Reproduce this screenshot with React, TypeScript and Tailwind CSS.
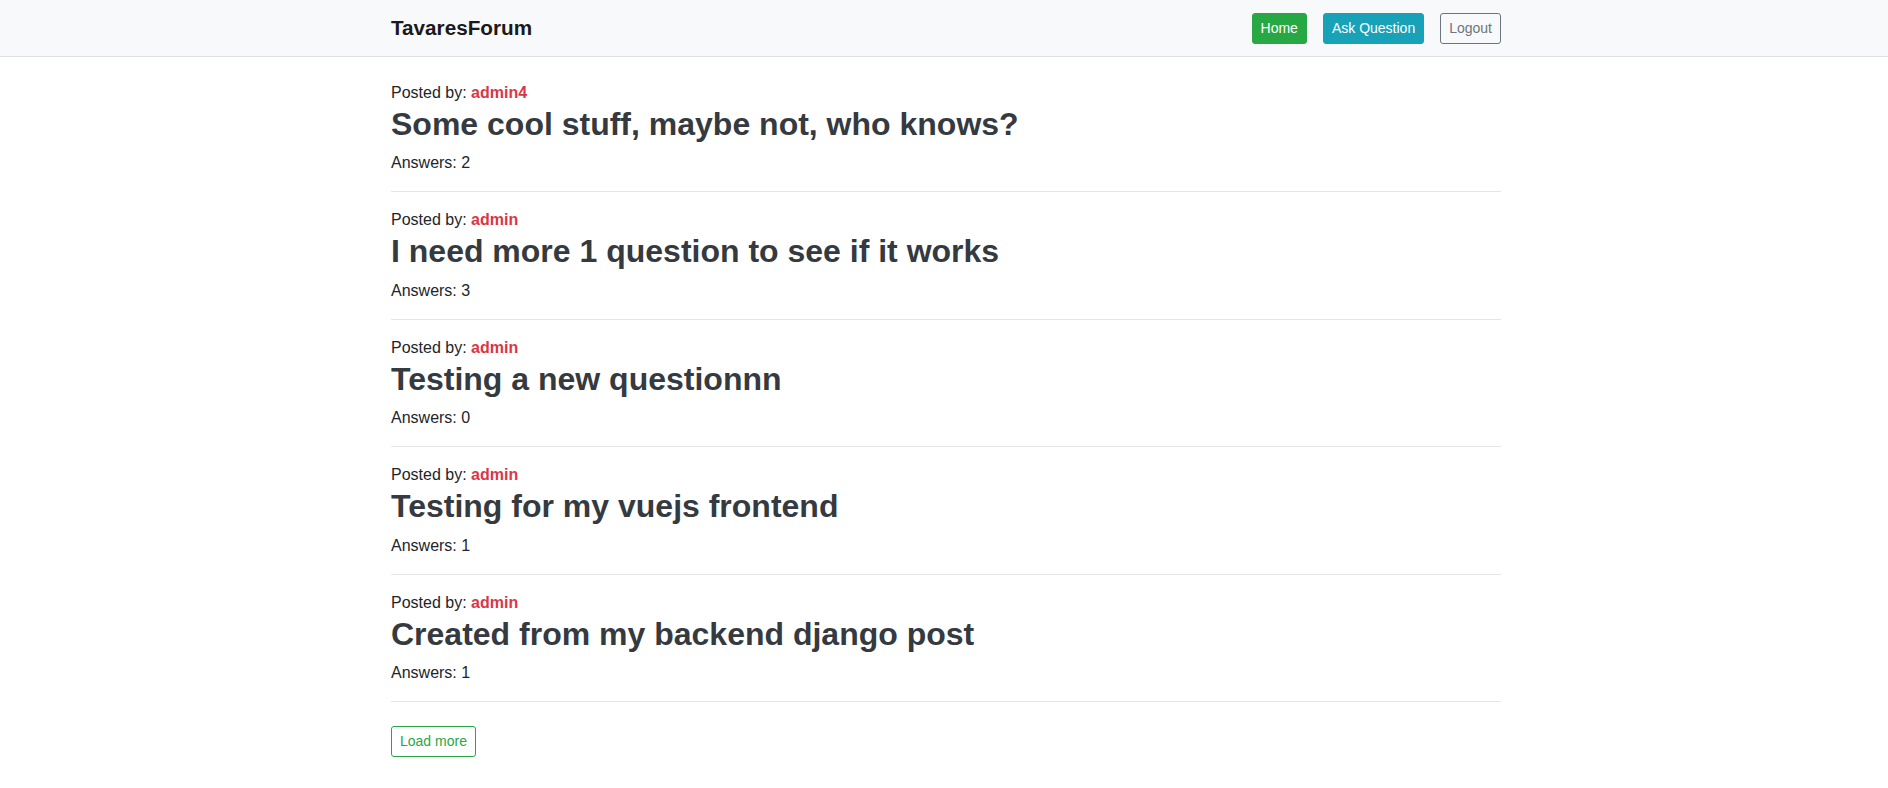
const questions = [
  { author: "admin4", title: "Some cool stuff, maybe not, who knows?", answers: 2 },
  { author: "admin", title: "I need more 1 question to see if it works", answers: 3 },
  { author: "admin", title: "Testing a new questionnn", answers: 0 },
  { author: "admin", title: "Testing for my vuejs frontend", answers: 1 },
  { author: "admin", title: "Created from my backend django post", answers: 1 },
];

function Navbar() {
  return (
    <nav className="h-[57px] border-b border-[#dee2e6] bg-[#f8f9fa]">
      <div className="mx-auto flex h-14 w-[1114px] items-center justify-between pl-[4px]">
        <a href="#" className="text-[20.7px] font-bold leading-[30px] text-[#1a1a1a]">
          TavaresForum
        </a>
        <div className="flex items-center gap-4">
          <button className="h-[31px] rounded-[3px] border border-[#28a745] bg-[#28a745] px-2 text-[14px] leading-[21px] text-white">
            Home
          </button>
          <button className="h-[31px] rounded-[3px] border border-[#17a2b8] bg-[#17a2b8] px-2 text-[14px] leading-[21px] text-white">
            Ask Question
          </button>
          <button className="h-[31px] rounded-[3px] border border-[#6c757d] bg-transparent px-2 text-[14px] leading-[21px] text-[#6c757d]">
            Logout
          </button>
        </div>
      </div>
    </nav>
  );
}

export default function App() {
  return (
    <div className="min-h-screen bg-white font-['Liberation_Sans',Arial,sans-serif] text-[16px] leading-6 text-[#212529]">
      <Navbar />
      <main className="mx-auto mt-6 w-[1114px] pl-[4px]">
        {questions.map((q, i) => (
          <div key={i}>
            <p>
              Posted by: <strong className="font-bold text-[#dc3545]">{q.author}</strong>
            </p>
            <h2 className="mb-2 text-[32px] font-bold leading-[38.4px] text-[#343a40]">{q.title}</h2>
            <p>Answers: {q.answers}</p>
            <hr className="my-4 border-t border-[#e6e6e6]" />
          </div>
        ))}
        <div className="pt-2">
          <button className="h-[31px] rounded-[3px] border border-[#28a745] bg-transparent px-2 text-[14px] leading-[21px] text-[#28a745]">
            Load more
          </button>
        </div>
      </main>
    </div>
  );
}
